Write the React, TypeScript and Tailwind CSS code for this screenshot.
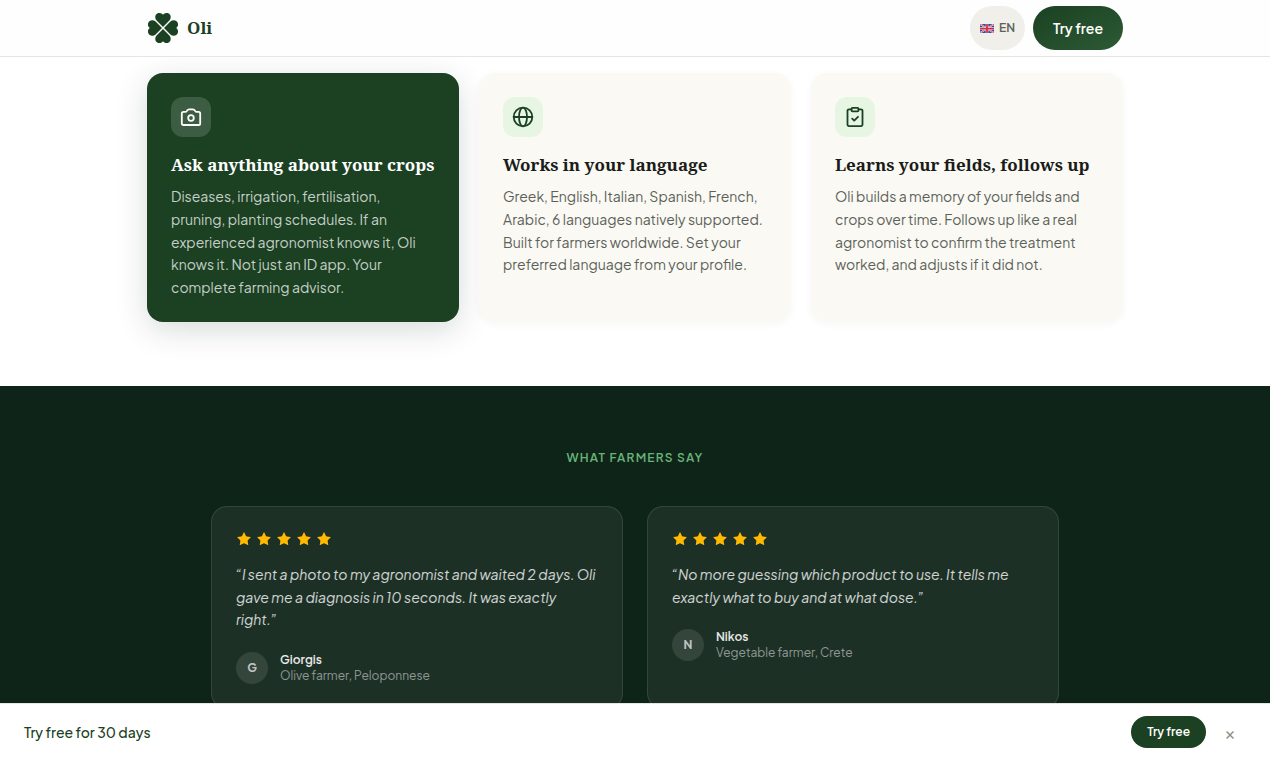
import React from 'react';
import { Star } from 'lucide-react';

const iconProps = {
  viewBox: '0 0 24 24',
  fill: 'none',
  stroke: 'currentColor',
  strokeWidth: 1.8,
  strokeLinecap: 'round' as const,
  strokeLinejoin: 'round' as const,
  className: 'size-6',
  'aria-hidden': true,
};

const CameraIcon = () => (
  <svg {...iconProps}>
    <path d="M2.800 8.400a1.600 1.600 0 0 1 1.600-1.600h1.800c.7 0 1.200-.3 1.600-.9.6-.9 1-1.500 2.400-1.500h3.600c1.400 0 1.800.6 2.400 1.500.4.6.9.9 1.600.9h1.800a1.600 1.600 0 0 1 1.600 1.600v10a1.600 1.600 0 0 1-1.600 1.600H4.400a1.600 1.600 0 0 1-1.600-1.600z" />
    <circle cx="12" cy="13" r="2.800" />
  </svg>
);

const GlobeIcon = () => (
  <svg {...iconProps}>
    <circle cx="12" cy="12" r="9.300" />
    <ellipse cx="12" cy="12" rx="4" ry="9.300" />
    <path d="M2.700 12h18.600" />
  </svg>
);

const ClipboardIcon = () => (
  <svg {...iconProps}>
    <path d="M8.500 4.300H6A1.500 1.500 0 0 0 4.500 5.800v13.800A1.500 1.500 0 0 0 6 21.100h12a1.500 1.500 0 0 0 1.500-1.500V5.800A1.500 1.500 0 0 0 18 4.300h-2.500" />
    <rect x="8.500" y="2.800" width="7" height="3.500" rx="1" />
    <path d="m9.200 13.600 2 2 3.800-3.800" />
  </svg>
);

const features = [
  {
    icon: <CameraIcon />,
    title: 'Ask anything about your crops',
    text: 'Diseases, irrigation, fertilisation, pruning, planting schedules. If an experienced agronomist knows it, Oli knows it. Not just an ID app. Your complete farming advisor.',
    highlight: true,
  },
  {
    icon: <GlobeIcon />,
    title: 'Works in your language',
    text: 'Greek, English, Italian, Spanish, French, Arabic, 6 languages natively supported. Built for farmers worldwide. Set your preferred language from your profile.',
  },
  {
    icon: <ClipboardIcon />,
    title: 'Learns your fields, follows up',
    text: 'Oli builds a memory of your fields and crops over time. Follows up like a real agronomist to confirm the treatment worked, and adjusts if it did not.',
  },
];

const testimonials = [
  {
    quote: '“I sent a photo to my agronomist and waited 2 days. Oli gave me a diagnosis in 10 seconds. It was exactly right.”',
    name: 'Giorgis',
    role: 'Olive farmer, Peloponnese',
  },
  {
    quote: '“No more guessing which product to use. It tells me exactly what to buy and at what dose.”',
    name: 'Nikos',
    role: 'Vegetable farmer, Crete',
  },
];

function Clover() {
  return (
    <svg viewBox="0 0 32 32" className="size-8 fill-[#1b4122]" aria-hidden="true">
      {[0, 90, 180, 270].map((angle) => (
        <path
          key={angle}
          transform={`rotate(${angle} 16 16)`}
          d="M16 15 9.600 8.600C7.300 6 8.100 2 11.300 1.100 13.300.600 15.100 1.300 16 2.800 16.900 1.300 18.700.600 20.700 1.100 23.900 2 24.700 6 22.400 8.600Z"
        />
      ))}
    </svg>
  );
}

function Flag() {
  return (
    <svg viewBox="0 0 28 18" className="h-[9px] w-[14px]" aria-hidden="true">
      <rect width="28" height="18" rx="1" fill="#29509f" />
      <path d="M0 0l28 18M28 0 0 18" stroke="#fff" strokeWidth="3" />
      <path d="M0 0l28 18M28 0 0 18" stroke="#d8283f" strokeWidth="1.500" />
      <path d="M14 0v18M0 9h28" stroke="#fff" strokeWidth="5" />
      <path d="M14 0v18M0 9h28" stroke="#d8283f" strokeWidth="3.500" />
    </svg>
  );
}

function App() {
  return (
    <div className="flex min-h-screen flex-col bg-white font-['Plus_Jakarta_Sans','Inter',sans-serif]">
      <header className="sticky top-0 z-10 border-b border-[#e5e5e2] bg-[#fefefe]">
        <div className="mx-auto flex h-14 max-w-5xl items-center justify-between px-6">
          <a href="#" className="flex items-center gap-2">
            <Clover />
            <span className="font-['Noto_Serif','Liberation_Serif',serif] text-[17px] font-bold text-[#1b4122]">Oli</span>
          </a>
          <div className="flex items-center gap-2">
            <button className="flex h-11 items-center gap-[5px] rounded-full bg-[#f0efea] px-2.5 text-xs font-semibold text-[#5c6259]">
              <Flag />
              EN
            </button>
            <button className="h-11 rounded-full bg-linear-to-br from-[#1b4122] to-[#2d5a35] px-5 text-sm font-semibold text-white">
              Try free
            </button>
          </div>
        </div>
      </header>

      <main className="flex flex-1 flex-col">
        <section className="mx-auto grid w-full max-w-5xl grid-cols-3 gap-5 px-6 pt-4 pb-16">
          {features.map((f) => (
            <article
              key={f.title}
              className={
                f.highlight
                  ? 'rounded-2xl bg-[#1b4122] px-6 pt-6 pb-[23px] text-white shadow-[0_8px_32px_rgba(15,36,25,0.16)]'
                  : 'rounded-2xl bg-[#faf9f4] px-6 pt-6 pb-[23px] text-[#1a1c19] shadow-[0_2px_8px_rgba(15,36,25,0.04)]'
              }
            >
              <div
                className={
                  f.highlight
                    ? 'flex size-10 items-center justify-center rounded-xl bg-white/15'
                    : 'flex size-10 items-center justify-center rounded-xl bg-[#e6f6e3] text-[#1b4122]'
                }
              >
                {f.icon}
              </div>
              <h3 className="mt-4 font-['Noto_Serif','Liberation_Serif',serif] text-[17px] leading-6 font-bold">
                {f.title}
              </h3>
              <p
                className={
                  f.highlight
                    ? 'mt-2 text-sm leading-relaxed text-white/75'
                    : 'mt-2 text-sm leading-relaxed text-[#5c6259]'
                }
              >
                {f.text}
              </p>
            </article>
          ))}
        </section>

        <section className="flex-1 bg-[#0f2419] pt-16 pb-12">
          <div className="mx-auto max-w-4xl px-6">
            <h2 className="mb-10 text-center text-xs font-semibold tracking-widest text-[#68b478] uppercase">
              What farmers say
            </h2>
            <div className="grid grid-cols-2 gap-6">
              {testimonials.map((t) => (
                <figure key={t.name} className="rounded-2xl border border-white/10 bg-white/6 p-6">
                  <div className="flex gap-1">
                    {[1, 2, 3, 4, 5].map((n) => (
                      <Star key={n} size={16} strokeWidth={0} className="fill-[#ffb900]" />
                    ))}
                  </div>
                  <blockquote className="mt-4 text-sm leading-relaxed text-white/80 italic">
                    {t.quote}
                  </blockquote>
                  <figcaption className="mt-[21px] flex items-center gap-3">
                    <span className="flex size-8 items-center justify-center rounded-full bg-white/10 text-xs font-bold text-white/70">
                      {t.name[0]}
                    </span>
                    <span className="flex flex-col text-xs">
                      <span className="font-semibold text-white/90">{t.name}</span>
                      <span className="text-white/50">{t.role}</span>
                    </span>
                  </figcaption>
                </figure>
              ))}
            </div>
          </div>
        </section>
      </main>

      <div className="fixed inset-x-0 bottom-0 z-10 flex items-center justify-between border-t border-[#e5e5e2] bg-white px-6 py-3">
        <p className="text-sm font-medium text-[#1b4122]">Try free for 30 days</p>
        <div className="flex items-center gap-2">
          <button className="h-8 rounded-full bg-[#1b4122] px-4 text-xs font-semibold text-white">Try free</button>
          <button aria-label="Close" className="size-8 text-lg text-[#8c918a]">
            ×
          </button>
        </div>
      </div>
    </div>
  );
}

export default App;
